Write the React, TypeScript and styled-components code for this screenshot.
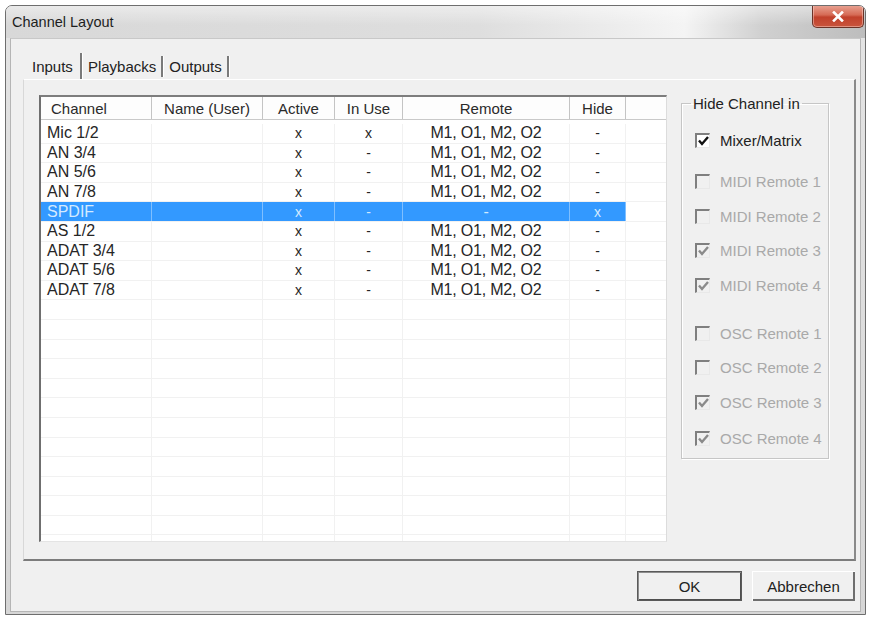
import React from 'react';
import styled, { createGlobalStyle } from 'styled-components';

const GlobalStyle = createGlobalStyle`
  html, body {
    margin: 0;
    padding: 0;
    background: #ffffff;
  }
  body {
    font-family: "Liberation Sans", Arial, sans-serif;
    color: #222;
  }
`;

const Window = styled.div`
  box-sizing: border-box;
  margin: 5px 0 0 5px;
  width: 861px;
  height: 610px;
  display: flex;
  flex-direction: column;
  border: 1px solid #6e6e6e;
  border-radius: 7px 7px 0 0;
  background: linear-gradient(180deg, #e4e4e4 0%, #d6d6d6 100%);
  overflow: hidden;
`;

const TitleBar = styled.div`
  height: 32px;
  flex: none;
  display: flex;
  align-items: center;
  padding-left: 6px;
  background:
    linear-gradient(180deg, rgba(255, 255, 255, 0.45) 0%, rgba(255, 255, 255, 0) 60%),
    linear-gradient(90deg, #d8d8d8 0%, #dedede 55%, #f4f4f4 79%, #d0d0d0 88%, #bdbdbd 100%);
`;

const Title = styled.span`
  font-size: 14.5px;
  color: #1e1e1e;
`;

const CloseButton = styled.div`
  margin: -1px 1px 0 auto;
  align-self: flex-start;
  width: 52px;
  height: 23px;
  box-sizing: border-box;
  display: flex;
  align-items: center;
  justify-content: center;
  border: 1px solid #6b3328;
  border-top: none;
  border-radius: 0 0 5px 5px;
  background: linear-gradient(180deg, #e9a595 0%, #d66a55 45%, #c1402b 55%, #c9553d 100%);
  box-shadow: inset 0 0 0 1px rgba(255, 220, 210, 0.45);
`;

const Client = styled.div`
  flex: 1;
  margin: 0 4px 4px 4px;
  display: flex;
  flex-direction: column;
  padding: 14px 4px 10px 12px;
  background: #f0f0f0;
  border: 1px solid #b5b5b5;
  border-top-color: #c8c8c8;
  box-sizing: border-box;
`;

const TabStrip = styled.div`
  height: 26px;
  display: flex;
  align-items: stretch;
  flex: none;
`;

const Tab = styled.div<{ $active?: boolean }>`
  display: flex;
  align-items: center;
  padding: 0 ${(p) => (p.$active ? '7px' : '5px')} 0 ${(p) => (p.$active ? '9px' : '5px')};
  font-size: 15px;
  color: #222;
  margin-top: ${(p) => (p.$active ? '0' : '3px')};
  margin-bottom: ${(p) => (p.$active ? '0' : '2px')};
  border-right: 2px solid #7a7a7a;
  box-shadow: 1px 0 0 #ffffff;
  margin-right: 1px;
`;

const TabPanel = styled.div`
  flex: 1;
  display: flex;
  gap: 14px;
  align-items: flex-start;
  padding: 15px 25px 17px 15px;
  border-top: 1px solid #ffffff;
  border-left: 1px solid #d8d8d8;
  border-right: 2px solid #8a8a8a;
  border-bottom: 2px solid #7c7c7c;
  box-sizing: border-box;
  min-height: 0;
`;

const ListView = styled.div`
  width: 628px;
  height: 447px;
  box-sizing: border-box;
  flex: none;
  background: #ffffff;
  border-top: 2px solid #7d7d7d;
  border-left: 2px solid #6f6f6f;
  border-right: 1px solid #dcdcdc;
  border-bottom: 1px solid #e4e4e4;
  overflow: hidden;
`;

const columns = '111px 111px 72px 68px 167px 56px 1fr';

const HeaderRow = styled.div`
  display: grid;
  grid-template-columns: ${columns};
  height: 22px;
  border-bottom: 1px solid #c9c9c9;
  background: #fdfdfd;
`;

const HeaderCell = styled.div<{ $left?: boolean; $last?: boolean }>`
  display: flex;
  align-items: center;
  justify-content: ${(p) => (p.$left ? 'flex-start' : 'center')};
  padding-left: ${(p) => (p.$left ? '10px' : '0')};
  font-size: 15px;
  color: #2a2a2a;
  border-right: ${(p) => (p.$last ? 'none' : '1px solid #c4c4c4')};
  white-space: nowrap;
`;

const Body = styled.div`
  padding-top: 4px;
`;

const Row = styled.div`
  display: grid;
  grid-template-columns: ${columns};
  height: 19.6px;
  box-sizing: border-box;
  border-bottom: 1px solid #f1f1f1;
`;

const Cell = styled.div<{ $left?: boolean; $selected?: boolean; $filler?: boolean; $mono?: boolean }>`
  display: flex;
  align-items: center;
  justify-content: ${(p) => (p.$left ? 'flex-start' : 'center')};
  padding-left: ${(p) => (p.$left ? '6px' : '0')};
  font-size: 16px;
  line-height: 1;
  letter-spacing: ${(p) => (p.$mono ? '-0.2px' : '0')};
  white-space: nowrap;
  color: ${(p) => (p.$selected ? '#d4eaff' : '#262626')};
  background: ${(p) => (p.$selected ? '#3399ff' : 'transparent')};
  border-right: 1px solid ${(p) => (p.$selected ? '#7fbfff' : '#f1f1f1')};
  ${(p) => (p.$filler ? 'border-right: none;' : '')}
`;

const SmallMark = styled.span`
  font-size: 14px;
  color: inherit;
`;

const Group = styled.fieldset`
  margin: 0;
  width: 150px;
  box-sizing: border-box;
  padding: 0 0 10px 13px;
  border: 1px solid #c6c6c6;
  box-shadow: inset 1px 1px 0 #ffffff, 1px 1px 0 #ffffff;
  height: 364px;
  display: flex;
  flex-direction: column;
`;

const Legend = styled.legend`
  font-size: 15px;
  color: #222;
  padding: 0 2px;
  margin-left: -4px;
`;

const CheckRow = styled.div<{ $space: number }>`
  display: flex;
  align-items: center;
  height: 20px;
  margin-top: ${(p) => p.$space}px;
`;

const Box = styled.div<{ $enabled?: boolean }>`
  width: 15px;
  height: 15px;
  box-sizing: border-box;
  flex: none;
  display: flex;
  align-items: center;
  justify-content: center;
  border-top: 2px solid #7f7f7f;
  border-left: 2px solid #7f7f7f;
  border-right: 1px solid #e8e8e8;
  border-bottom: 1px solid #e8e8e8;
  background: ${(p) => (p.$enabled ? '#ffffff' : '#f0f0f0')};
`;

const CheckLabel = styled.span<{ $enabled?: boolean }>`
  margin-left: 10px;
  font-size: 15px;
  color: ${(p) => (p.$enabled ? '#222' : '#a9a9a9')};
  white-space: nowrap;
`;

const ButtonRow = styled.div`
  display: flex;
  justify-content: flex-end;
  gap: 10px;
  margin-top: 10px;
  height: 30px;
  flex: none;
  padding-right: 1px;
`;

const DialogButton = styled.button<{ $default?: boolean }>`
  width: ${(p) => (p.$default ? '105px' : '103px')};
  height: 30px;
  box-sizing: border-box;
  font-family: "Liberation Sans", Arial, sans-serif;
  font-size: 15px;
  color: #222;
  background: #f0f0f0;
  padding: 0;
  border: ${(p) => (p.$default ? '1px solid #5a5a5a' : 'none')};
  box-shadow: ${(p) =>
    p.$default
      ? 'inset 1px 1px 0 #8d8d8d, inset -1px -1px 0 #4f4f4f'
      : 'inset 1px 1px 0 #ffffff, inset -2px -2px 0 #6e6e6e'};
`;

type RowData = [string, string, string, string, string, string];

const remote = 'M1, O1, M2, O2';

const rows: RowData[] = [
  ['Mic 1/2', '', 'x', 'x', remote, '-'],
  ['AN 3/4', '', 'x', '-', remote, '-'],
  ['AN 5/6', '', 'x', '-', remote, '-'],
  ['AN 7/8', '', 'x', '-', remote, '-'],
  ['SPDIF', '', 'x', '-', '-', 'x'],
  ['AS 1/2', '', 'x', '-', remote, '-'],
  ['ADAT 3/4', '', 'x', '-', remote, '-'],
  ['ADAT 5/6', '', 'x', '-', remote, '-'],
  ['ADAT 7/8', '', 'x', '-', remote, '-'],
];

const emptyRows = Array.from({ length: 14 });

const headers = ['Channel', 'Name (User)', 'Active', 'In Use', 'Remote', 'Hide', ''];

// space = gap above each checkbox row, read off the reference
const options = [
  { label: 'Mixer/Matrix', checked: true, enabled: true, space: 19 },
  { label: 'MIDI Remote 1', checked: false, enabled: false, space: 21 },
  { label: 'MIDI Remote 2', checked: false, enabled: false, space: 15 },
  { label: 'MIDI Remote 3', checked: true, enabled: false, space: 15 },
  { label: 'MIDI Remote 4', checked: true, enabled: false, space: 15 },
  { label: 'OSC Remote 1', checked: false, enabled: false, space: 28 },
  { label: 'OSC Remote 2', checked: false, enabled: false, space: 15 },
  { label: 'OSC Remote 3', checked: true, enabled: false, space: 15 },
  { label: 'OSC Remote 4', checked: true, enabled: false, space: 16 },
];

const CheckMark = ({ color }: { color: string }) => (
  <svg width="11" height="10" viewBox="0 0 11 10">
    <polyline points="1,4.5 4,8 10,1" fill="none" stroke={color} strokeWidth="2.4" />
  </svg>
);

const CloseGlyph = () => (
  <svg width="12" height="11" viewBox="0 0 12 11">
    <path d="M2 1.5 L10 9.5 M10 1.5 L2 9.5" stroke="#ffffff" strokeWidth="2.6" strokeLinecap="square" />
  </svg>
);

const App: React.FC = () => (
  <>
    <GlobalStyle />
    <Window>
      <TitleBar>
        <Title>Channel Layout</Title>
        <CloseButton>
          <CloseGlyph />
        </CloseButton>
      </TitleBar>
      <Client>
        <TabStrip>
          <Tab $active>Inputs</Tab>
          <Tab>Playbacks</Tab>
          <Tab>Outputs</Tab>
        </TabStrip>
        <TabPanel>
          <ListView>
            <HeaderRow>
              {headers.map((h, i) => (
                <HeaderCell key={i} $left={i === 0} $last={i === headers.length - 1}>
                  {h}
                </HeaderCell>
              ))}
            </HeaderRow>
            <Body>
              {rows.map((r) => {
                const sel = r[0] === 'SPDIF';
                return (
                  <Row key={r[0]}>
                    <Cell $left $selected={sel}>{r[0]}</Cell>
                    <Cell $selected={sel}>{r[1]}</Cell>
                    <Cell $selected={sel}><SmallMark>{r[2]}</SmallMark></Cell>
                    <Cell $selected={sel}><SmallMark>{r[3]}</SmallMark></Cell>
                    <Cell $selected={sel} $mono>{r[4]}</Cell>
                    <Cell $selected={sel}><SmallMark>{r[5]}</SmallMark></Cell>
                    <Cell $filler />
                  </Row>
                );
              })}
              {emptyRows.map((_, i) => (
                <Row key={`e${i}`}>
                  <Cell />
                  <Cell />
                  <Cell />
                  <Cell />
                  <Cell />
                  <Cell />
                  <Cell $filler />
                </Row>
              ))}
            </Body>
          </ListView>
          <Group>
            <Legend>Hide Channel in</Legend>
            {options.map((o) => (
              <CheckRow key={o.label} $space={o.space}>
                <Box $enabled={o.enabled}>
                  {o.checked && <CheckMark color={o.enabled ? '#111' : '#8a8a8a'} />}
                </Box>
                <CheckLabel $enabled={o.enabled}>{o.label}</CheckLabel>
              </CheckRow>
            ))}
          </Group>
        </TabPanel>
        <ButtonRow>
          <DialogButton $default>OK</DialogButton>
          <DialogButton>Abbrechen</DialogButton>
        </ButtonRow>
      </Client>
    </Window>
  </>
);

export default App;
